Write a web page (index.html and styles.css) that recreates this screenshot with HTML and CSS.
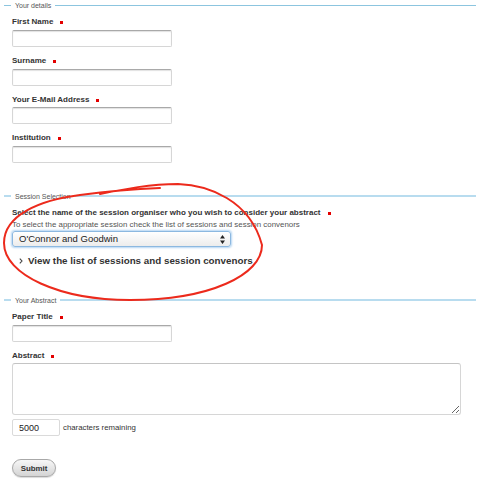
FILE: index.html
```html
<!DOCTYPE html>
<html>
<head>
<meta charset="utf-8">
<link rel="stylesheet" href="styles.css">
</head>
<body>
<form class="form">
  <section class="group">
    <div class="legend thin">Your details</div>
    <div class="field"><label class="label">First Name<span class="req"></span></label><input class="text" type="text"></div>
    <div class="field"><label class="label">Surname<span class="req"></span></label><input class="text" type="text"></div>
    <div class="field"><label class="label">Your E-Mail Address<span class="req"></span></label><input class="text" type="text"></div>
    <div class="field"><label class="label">Institution<span class="req"></span></label><input class="text" type="text"></div>
  </section>

  <section class="group gap">
    <div class="legend">Session Selection</div>
    <label class="label">Select the name of the session organiser who you wish to consider your abstract<span class="req"></span></label>
    <p class="hint">To select the appropriate session check the list of sessions and session convenors</p>
    <div class="select-wrap">
      <select class="select"><option>O'Connor and Goodwin</option></select>
      <svg class="arrows" width="5" height="9" viewBox="0 0 5 9"><path d="M2.5 0 L5 3.4 L0 3.4 Z M2.5 9 L5 5.6 L0 5.6 Z" fill="#222"/></svg>
    </div>
    <div class="view-row">
      <svg class="chev" width="4" height="6" viewBox="0 0 4 6"><path d="M0.8 0.6 L3 3 L0.8 5.4" fill="none" stroke="#444" stroke-width="1.1"/></svg>
      <span class="view-text">View the list of sessions and session convenors</span>
    </div>
  </section>

  <section class="group gap">
    <div class="legend">Your Abstract</div>
    <div class="field"><label class="label">Paper Title<span class="req"></span></label><input class="text" type="text"></div>
    <div class="field"><label class="label">Abstract<span class="req"></span></label><textarea class="area"></textarea></div>
    <div class="count-row"><input class="count" type="text" value="5000"><span class="count-text">characters remaining</span></div>
    <button class="submit" type="button">Submit</button>
  </section>
</form>

<svg class="annot" width="488" height="480" viewBox="0 0 488 480">
  <path d="M100 194 C125 189 150 184 178 184 C208 185 250 200 262 245 C262 275 210 300 130 300 C60 300 4 275 4 243 C4 215 40 200 80 195 C110 191 135 189 160 188" fill="none" stroke="#ec2a1c" stroke-width="2" stroke-linecap="round"/>
</svg>
</body>
</html>
```

FILE: styles.css
```css
html, body {
  margin: 0;
  padding: 0;
  background: #fff;
}
body {
  font-family: "Liberation Sans", Arial, sans-serif;
  color: #333;
  width: 488px;
  height: 480px;
  overflow: hidden;
  position: relative;
}
.form {
  width: 472px;
  padding-left: 4px;
}
.group {
  display: block;
}
.group.gap {
  margin-top: 27.5px;
}
.legend {
  display: flex;
  align-items: center;
  gap: 4px;
  height: 11px;
  font-size: 7px;
  color: #555;
  margin-bottom: 6.4px;
}
.legend::before,
.legend::after {
  content: "";
  height: 2px;
  background: #b8dcef;
}
.legend::before {
  width: 7px;
}
.legend::after {
  flex: 1;
}
.legend.thin::before,
.legend.thin::after {
  height: 1px;
  background: #8cc5df;
}
.field,
.label,
.hint,
.select-wrap,
.view-row,
.count-row,
.submit {
  margin-left: 8px;
}
.field .label {
  margin-left: 0;
}
.field + .field {
  margin-top: 9px;
}
.label {
  display: block;
  font-size: 8px;
  font-weight: bold;
  line-height: 10px;
  color: #333;
  margin-bottom: 2.7px;
}
.req {
  display: inline-block;
  width: 3px;
  height: 3px;
  background: #e30000;
  margin-left: 7px;
  vertical-align: 0;
}
.text {
  display: block;
  box-sizing: border-box;
  width: 160px;
  height: 17px;
  margin: 0;
  border: 1px solid #d6d6d6;
  border-top-color: #a9a9a9;
  border-radius: 2px;
  box-shadow: inset 0 1px 1px rgba(0, 0, 0, 0.12);
  background: #fff;
  padding: 0 4px;
}
.hint {
  margin-top: -1.2px;
  margin-bottom: 0;
  font-size: 7.9px;
  line-height: 10px;
  color: #555;
}
.select-wrap {
  position: relative;
  width: 219px;
  height: 16px;
  margin-top: 1.5px;
}
.select {
  -webkit-appearance: none;
  appearance: none;
  display: block;
  box-sizing: border-box;
  width: 219px;
  height: 16px;
  margin: 0;
  padding: 0 0 0 6px;
  border: 1px solid #8cb8e0;
  border-radius: 3px;
  box-shadow: 0 0 2px 1px #b5d6f3;
  background: linear-gradient(#ffffff, #ececec);
  font-family: "Liberation Sans", Arial, sans-serif;
  font-size: 9.5px;
  color: #222;
  line-height: 14px;
}
.arrows {
  position: absolute;
  right: 6px;
  top: 3.5px;
}
.view-row {
  display: flex;
  align-items: center;
  gap: 5px;
  margin-top: 8px;
  height: 12px;
  padding-left: 7px;
}
.chev {
  display: block;
  flex: none;
}
.view-text {
  font-size: 9.8px;
  font-weight: bold;
  line-height: 12px;
  color: #333;
}
.area {
  display: block;
  box-sizing: border-box;
  width: 449px;
  height: 52px;
  margin: 0;
  border: 1px solid #d6d6d6;
  border-top-color: #c4c4c4;
  border-radius: 3px;
  background: #fff;
}
.count-row {
  display: flex;
  align-items: center;
  gap: 3px;
  margin-top: 4px;
}
.count {
  box-sizing: border-box;
  width: 48px;
  height: 17px;
  margin: 0;
  padding: 0 0 0 6px;
  border: 1px solid #dadada;
  border-radius: 2px;
  font-family: "Liberation Sans", Arial, sans-serif;
  font-size: 9px;
  color: #222;
  background: #fff;
}
.count-text {
  font-size: 7.8px;
  color: #333;
}
.submit {
  display: block;
  box-sizing: border-box;
  width: 44px;
  height: 18px;
  margin-top: 23px;
  padding: 0;
  border: 1px solid #a8a8a8;
  border-radius: 9px;
  background: linear-gradient(#f7f7f7, #d4d4d4);
  box-shadow: 0 1px 1px rgba(0, 0, 0, 0.15);
  font-family: "Liberation Sans", Arial, sans-serif;
  font-size: 7.9px;
  font-weight: bold;
  color: #333;
}
.annot {
  position: absolute;
  left: 0;
  top: 0;
  pointer-events: none;
}
```
